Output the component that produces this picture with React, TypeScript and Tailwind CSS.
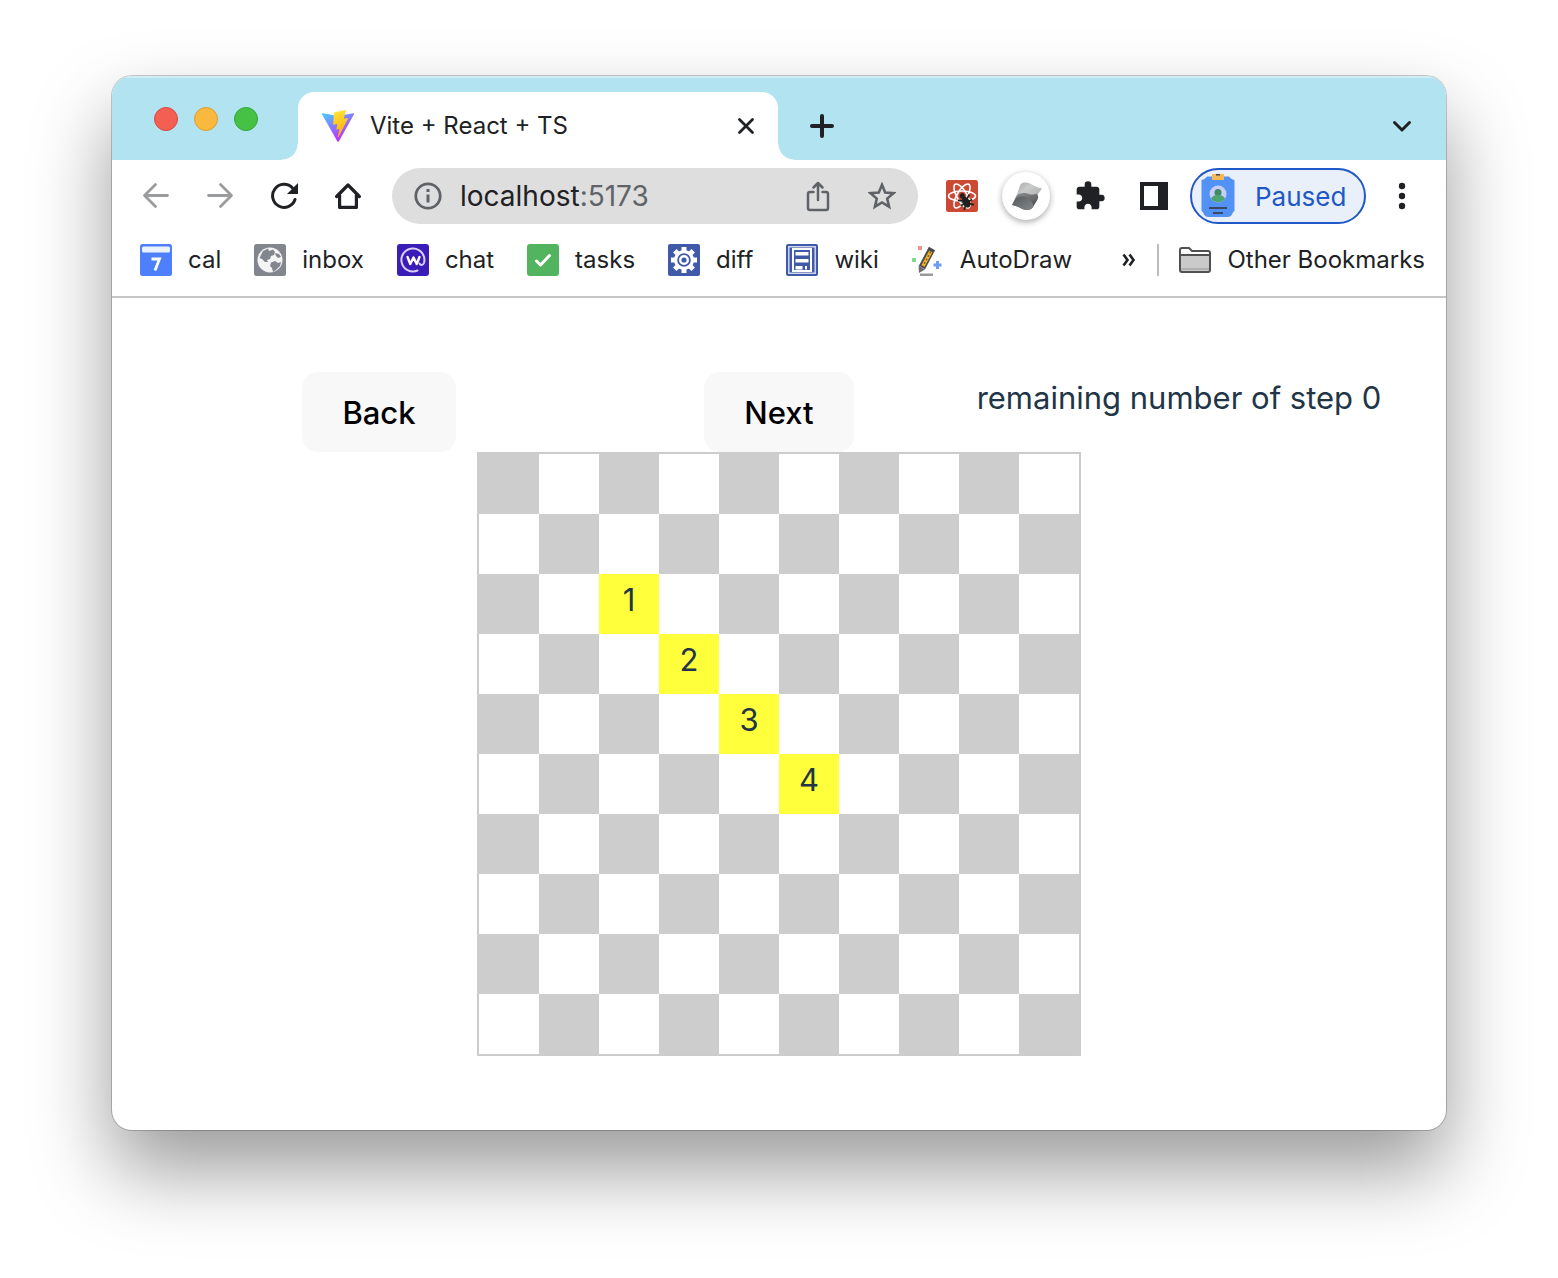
import type { ReactNode } from "react";

const visited: Record<string, number> = { "2-2": 1, "3-3": 2, "4-4": 3, "5-5": 4 };
const size = Array.from({ length: 10 }, (_, i) => i);

function ViteLogo() {
  return (
    <svg viewBox="0 0 32 32" className="size-8 shrink-0" aria-hidden="true">
      <defs>
        <linearGradient id="shield" x1="0" y1="0" x2="0.55" y2="0.9">
          <stop offset="0" stopColor="#41d1ff" />
          <stop offset="1" stopColor="#bd34fe" />
        </linearGradient>
        <linearGradient id="bolt" x1="0.4" y1="0" x2="0.6" y2="1">
          <stop offset="0" stopColor="#ffea5a" />
          <stop offset="0.1" stopColor="#ffdd35" />
          <stop offset="1" stopColor="#ffa800" />
        </linearGradient>
      </defs>
      <path fill="url(#shield)" d="M31.9 4.5 16.8 31.5a.8.8 0 0 1-1.4 0L.1 4.5a.8.8 0 0 1 .9-1.2l15 2.7 15-2.7a.8.8 0 0 1 .9 1.2Z" />
      <path fill="url(#bolt)" d="m23.4.1-11.2 2.2a.4.4 0 0 0-.3.4l-.7 11.6a.4.4 0 0 0 .5.4l3.1-.7a.4.4 0 0 1 .5.5l-.9 4.6a.4.4 0 0 0 .5.5l1.9-.6a.4.4 0 0 1 .5.5l-1.4 7.1c-.1.5.5.7.8.3l.2-.3 9-17.9a.4.4 0 0 0-.5-.6l-3.1.6a.4.4 0 0 1-.5-.5l2.1-7.5a.4.4 0 0 0-.5-.6Z" />
    </svg>
  );
}

function ToolButton({ label, children }: { label: string; children: ReactNode }) {
  return (
    <button type="button" aria-label={label} className="flex h-14 w-16 shrink-0 items-center justify-center">
      {children}
    </button>
  );
}

function TabStrip() {
  return (
    <div className="flex h-[84px] items-end bg-[#b2e3f0] shadow-[inset_0_2px_0_#cdeef6]">
      <div className="flex h-full w-[186px] shrink-0 gap-4 pt-[31px] pl-[42px]">
        <button type="button" aria-label="Close window" className="size-6 rounded-full border border-[#d9493f] bg-[#f35f51]" />
        <button type="button" aria-label="Minimize window" className="size-6 rounded-full border border-[#dc9e35] bg-[#f9b83e]" />
        <button type="button" aria-label="Zoom window" className="size-6 rounded-full border border-[#33a635] bg-[#47c145]" />
      </div>
      <div className="relative flex h-[68px] w-[480px] items-center rounded-t-2xl bg-white pl-6 pr-5">
        <span className="absolute bottom-0 -left-4 size-4 bg-[radial-gradient(circle_at_0_0,transparent_15px,#fff_16px)]" />
        <span className="absolute -right-4 bottom-0 size-4 bg-[radial-gradient(circle_at_100%_0,transparent_15px,#fff_16px)]" />
        <ViteLogo />
        <span className="ml-4 flex-1 text-2xl text-[#202124]">Vite + React + TS</span>
        <button type="button" aria-label="Close tab" className="flex size-6 items-center justify-center">
          <svg viewBox="0 0 24 24" className="size-6" fill="none" stroke="#202124" strokeWidth="2.8" strokeLinecap="round">
            <path d="m5.5 5.5 13 13M18.5 5.5l-13 13" />
          </svg>
        </button>
      </div>
      <button type="button" aria-label="New tab" className="ml-8 flex h-[68px] w-6 items-center justify-center">
        <svg viewBox="0 0 24 24" className="size-6" fill="none" stroke="#202124" strokeWidth="4" strokeLinecap="round">
          <path d="M12 2v20M2 12h20" />
        </svg>
      </button>
      <button type="button" aria-label="Search tabs" className="mr-8 ml-auto flex h-[68px] w-6 items-center justify-center">
        <svg viewBox="0 0 24 24" className="size-6" fill="none" stroke="#202124" strokeWidth="3" strokeLinecap="round" strokeLinejoin="round">
          <path d="m4.5 8.5 7.5 7.5 7.5-7.5" />
        </svg>
      </button>
    </div>
  );
}

function Toolbar() {
  return (
    <div className="flex h-[72px] items-center px-3">
      <ToolButton label="Back in history">
        <svg viewBox="0 0 28 28" className="size-7" fill="none" stroke="#9a9b9d" strokeWidth="2.8" strokeLinecap="round" strokeLinejoin="round">
          <path d="M25.500 13.500H3M13.500 2.500l-11 11 11 11" />
        </svg>
      </ToolButton>
      <ToolButton label="Forward in history">
        <svg viewBox="0 0 28 28" className="size-7" fill="none" stroke="#9a9b9d" strokeWidth="2.8" strokeLinecap="round" strokeLinejoin="round">
          <path d="M2.500 13.500H25M14.500 2.500l11 11-11 11" />
        </svg>
      </ToolButton>
      <ToolButton label="Reload">
        <svg viewBox="0 0 28 28" className="size-7" fill="none" stroke="#202124" strokeWidth="3">
          <path strokeLinecap="round" d="M25 17.500A11.500 11.500 0 1 1 22.500 6" />
          <path stroke="none" fill="#202124" d="M28 1v11H17Z" />
        </svg>
      </ToolButton>
      <ToolButton label="Home">
        <svg viewBox="0 0 28 28" className="size-7" fill="none" stroke="#202124" strokeWidth="3.2" strokeLinejoin="round" strokeLinecap="round">
          <path d="M2.600 14.500 14 3l11.400 11.500M5.600 13v12.400h16.800V13" />
        </svg>
      </ToolButton>
      <div className="mx-3 flex h-14 min-w-0 flex-1 items-center rounded-full bg-[#dedede] px-[22px]">
        <svg viewBox="0 0 28 28" className="size-7 shrink-0" fill="none" stroke="#5f6368" strokeWidth="2.8" aria-hidden="true">
          <circle cx="14" cy="14" r="12.2" />
          <path strokeWidth="3" d="M14 12.500v8M14 7v3" />
        </svg>
        <a href="http://localhost:5173" className="ml-[18px] flex-1 text-[28px] text-[#5f6368]">
          <span className="text-[#202124]">localhost</span>:5173
        </a>
        <button type="button" aria-label="Share" className="flex size-7 items-center justify-center">
          <svg viewBox="0 0 28 32" className="h-8 w-7" fill="none" stroke="#5f6368" strokeWidth="2.5" strokeLinecap="round" strokeLinejoin="round">
            <path d="M9.500 12H6a2 2 0 0 0-2 2v14a2 2 0 0 0 2 2h16a2 2 0 0 0 2-2V14a2 2 0 0 0-2-2h-3.500M14 20V3.500M9.500 7.500 14 3l4.500 4.500" />
          </svg>
        </button>
        <button type="button" aria-label="Bookmark this tab" className="ml-9 flex size-7 items-center justify-center">
          <svg viewBox="0 0 28 28" className="size-7" fill="none" stroke="#5f6368" strokeWidth="2.6">
            <path d="m14 2.800 3.200 7.700 8.200.7-6.200 5.400 1.900 8.100L14 20.400l-7.100 4.300 1.900-8.100-6.200-5.400 8.200-.7Z" />
          </svg>
        </button>
      </div>
      <ToolButton label="React Developer Tools">
        <svg viewBox="0 0 32 32" className="size-8">
          <rect width="32" height="32" rx="2.5" fill="#cc4a35" />
          <g fill="none" stroke="#fff" strokeWidth="1.6">
            <ellipse cx="16" cy="16" rx="13.5" ry="5" />
            <ellipse cx="16" cy="16" rx="13.5" ry="5" transform="rotate(60 16 16)" />
            <ellipse cx="16" cy="16" rx="13.5" ry="5" transform="rotate(120 16 16)" />
          </g>
          <g fill="#20201f" transform="rotate(-28 19 20)">
            <circle cx="18.5" cy="15" r="2.6" />
            <ellipse cx="19" cy="22.500" rx="3.6" ry="5.800" />
            <path stroke="#20201f" strokeWidth="1.7" fill="none" d="m12.500 17 3.500 2.500h6l3.500-2.500M12.500 23h13M13.500 28.500l3-3h5l3 3" />
          </g>
        </svg>
      </ToolButton>
      <ToolButton label="Solid Devtools">
        <span className="flex size-12 items-center justify-center rounded-full bg-white shadow-[0_2px_6px_rgba(0,0,0,0.35)]">
          <svg viewBox="0 0 31 30" className="h-[30px] w-[31px]">
            <defs>
              <linearGradient id="upper" x1="0" y1="0" x2="1" y2="0.6">
                <stop offset="0" stopColor="#a4a6a8" />
                <stop offset="0.5" stopColor="#c9caca" />
                <stop offset="1" stopColor="#b4b5b6" />
              </linearGradient>
              <linearGradient id="lower" x1="0" y1="0" x2="0.7" y2="1">
                <stop offset="0" stopColor="#909294" />
                <stop offset="1" stopColor="#4c4e50" />
              </linearGradient>
              <linearGradient id="fold" x1="0" y1="0" x2="1" y2="1">
                <stop offset="0" stopColor="#55585a" />
                <stop offset="1" stopColor="#85888a" />
              </linearGradient>
            </defs>
            <path fill="url(#upper)" d="M9.500 3.500C11.500 1 16 1 19.500 2.800 23 4.800 27 7 31 7.500L27 13c-3 2-6 2-9 .5-4-1.500-8-2-12.500 1Z" />
            <path fill="url(#lower)" d="M5.500 14.500c4-3.500 9-2.800 13-1.300 2.500.8 5 .3 7.500-.4 1.500 1.700 1.500 4 .3 6.200l-4.300 7c-2 3.200-6 3.500-10 2.200C8.500 26.500 5 24.500 1 24Z" />
            <path fill="url(#fold)" d="M1 24l4-6.500c3-2.800 7.500-2.500 10.500-1 4 2 7 5 6.500 9.500-2 3.200-6 3.500-10 2.200C8.500 26.500 5 24.500 1 24Z" />
          </svg>
        </span>
      </ToolButton>
      <ToolButton label="Extensions">
        <svg viewBox="0 0 24 24" className="size-8" fill="#202124">
          <path d="M20.500 11H19V7c0-1.100-.9-2-2-2h-4V3.500a2.500 2.500 0 0 0-5 0V5H4c-1.100 0-1.990.9-1.990 2v3.800H3.500c1.490 0 2.700 1.210 2.700 2.700s-1.210 2.700-2.700 2.700H2V20c0 1.100.9 2 2 2h3.800v-1.500c0-1.490 1.210-2.700 2.700-2.700 1.490 0 2.700 1.210 2.700 2.700V22H17c1.100 0 2-.9 2-2v-4h1.500a2.500 2.500 0 0 0 0-5z" />
        </svg>
      </ToolButton>
      <ToolButton label="Side panel">
        <span className="block size-7 border-4 border-r-[10px] border-[#202124]" />
      </ToolButton>
      <button type="button" className="mx-1 flex h-14 w-44 shrink-0 items-center rounded-full border-2 border-[#2058c7] bg-[#eaf0fa] pl-[9px] text-[26px] text-[#2058c7]">
        <svg viewBox="0 0 34 44" className="h-11 w-[34px]" aria-hidden="true">
          <path fill="#5291f5" d="M6 2.500h22c1.500 2 3 2.800 5.500 3.500v31c-1 .5-1.500 1-2 2.500-.8 2-2.500 3.500-5 3.500h-19c-2.500 0-4.200-1.500-5-3.500-.5-1.500-1-2-2-2.500V6C3 5.300 4.500 4.500 6 2.500Z" />
          <path fill="#f7b955" d="M11 0h12v6H11Z" />
          <path fill="#41464d" d="M15 0h4v1.500h-4Z" />
          <circle cx="17" cy="20" r="8.5" fill="#c5cdf8" />
          <circle cx="17" cy="18.500" r="3.5" fill="#3f8a62" />
          <path fill="#4da472" d="M10 24.500c1-2.500 4-3.500 7-3.500s6 1 7 3.500c-3 5-11 5-14 0Z" />
          <path stroke="#3a4a66" strokeWidth="2" d="M8 34h18M12 39h10" />
        </svg>
        <span className="ml-5">Paused</span>
      </button>
      <ToolButton label="Menu">
        <svg viewBox="0 0 8 28" className="h-7 w-2" fill="#202124">
          <circle cx="4" cy="4" r="3.2" />
          <circle cx="4" cy="14" r="3.2" />
          <circle cx="4" cy="24" r="3.2" />
        </svg>
      </ToolButton>
    </div>
  );
}

const bookmarks: { name: string; icon: ReactNode }[] = [
  {
    name: "cal",
    icon: (
      <>
        <rect width="32" height="32" rx="2.5" fill="#4e7ffc" />
        <rect x="2" y="2.500" width="28" height="6" rx="1.5" fill="#fff" opacity=".9" />
        <path fill="none" stroke="#fff" strokeWidth="2.8" d="M11.500 15h8l-4.500 11.500" />
      </>
    ),
  },
  {
    name: "inbox",
    icon: (
      <>
        <rect width="32" height="32" rx="2.5" fill="#82868f" />
        <circle cx="16" cy="16" r="12.5" fill="#f4f4f5" />
        <path fill="#82868f" d="m9 7 5-2.500 1 2.500 4-1.500 2 2.500-1 3-3 1-1 3-3 1 1 2h-3L8 15 5.500 14ZM17 18.500l4-1.500 3 2 3-1-1 4-4 4-3 2-1-4-2-2ZM21 9l4 1 2 3-3 1-2-2Z" />
      </>
    ),
  },
  {
    name: "chat",
    icon: (
      <>
        <rect width="32" height="32" rx="3" fill="#3a1db8" />
        <path fill="none" stroke="#d9d1f8" strokeWidth="2" strokeLinecap="round" d="M20.500 26.500A11.500 11.500 0 1 1 27 19c-1 2.500-3.500 2.500-4.500.5" />
        <path fill="none" stroke="#fff" strokeWidth="2.4" strokeLinecap="round" strokeLinejoin="round" d="m10.500 13 2.800 7 3.200-6.500 3.200 6.500L22.500 13" />
      </>
    ),
  },
  {
    name: "tasks",
    icon: (
      <>
        <rect width="32" height="32" rx="3" fill="#52b45f" />
        <path fill="none" stroke="#fff" strokeWidth="3" strokeLinecap="round" strokeLinejoin="round" d="m9.500 17 4 4 9-9.500" />
      </>
    ),
  },
  {
    name: "diff",
    icon: (
      <>
        <rect width="32" height="32" rx="2" fill="#4059a9" />
        <g stroke="#fff" strokeWidth="5">
          <path d="M16 3v26M3 16h26M6.800 6.800l18.400 18.400M25.200 6.800 6.800 25.200" />
        </g>
        <circle cx="16" cy="16" r="10" fill="#fff" />
        <circle cx="16" cy="16" r="6.800" fill="#4059a9" />
        <circle cx="16" cy="16" r="3.8" fill="none" stroke="#fff" strokeWidth="2.4" />
      </>
    ),
  },
  {
    name: "wiki",
    icon: (
      <>
        <rect width="32" height="32" rx="2" fill="#4059a9" />
        <path fill="none" stroke="#fff" strokeWidth="1.5" d="M2.800 2.800h26.400v26.400H2.800Z" opacity=".75" />
        <path fill="none" stroke="#fff" strokeWidth="2" d="M7 5h18v22H7Z" />
        <path fill="#fff" d="M9.500 8h13v3.500h-13ZM9.500 15h13v3.500h-13ZM9.500 22h7v3.500h-7ZM19 22h2v3.500h-2Z" />
      </>
    ),
  },
  {
    name: "AutoDraw",
    icon: (
      <>
        <path stroke="#4b4b4b" strokeWidth="7" d="M20 4.500 10 23.500" />
        <path stroke="#f3b62b" strokeWidth="3.6" d="M18.800 7.500 11 22" />
        <path stroke="#8b6a1c" strokeWidth="1.6" strokeDasharray="2 2" d="M18.800 7.500 11 22" />
        <path fill="#6c6c6c" d="m6.500 21.500 6.500 4-6 3.500Z" />
        <path fill="#999" d="M8 29.500h13V32H8Z" />
        <path fill="#ee7670" opacity=".8" d="M6 2h4v4H6Z" />
        <path fill="#81d98a" d="M0 14h4v4H0Z" />
        <path fill="#4b83f2" opacity=".8" d="M24 17h3v2.500h2.500v3H27V25h-3v-2.500h-2.500v-3H24Z" />
      </>
    ),
  },
];

function BookmarksBar() {
  return (
    <nav aria-label="Bookmarks" className="flex h-[66px] items-center border-b-2 border-[#c6c6c6] pr-[21px] pb-2 pl-7 text-2xl text-[#202124]">
      <div className="flex gap-[33px]">
        {bookmarks.map((b) => (
          <a key={b.name} href={"#" + b.name} className="flex items-center gap-4">
            <svg viewBox="0 0 32 32" className="size-8" aria-hidden="true">{b.icon}</svg>
            {b.name}
          </a>
        ))}
      </div>
      <button type="button" aria-label="More bookmarks" className="ml-auto flex h-8 items-center pr-[21px]">
        <svg viewBox="0 0 14 14" className="size-[14px]" fill="none" stroke="#202124" strokeWidth="2.6">
          <path d="m1.500 1.500 4 5.500-4 5.500M7.500 1.500l4 5.500-4 5.500" />
        </svg>
      </button>
      <a href="#other" className="flex h-8 items-center gap-4 border-l-2 border-[#bcbcbc] pl-5">
        <svg viewBox="0 0 32 26" className="h-[26px] w-8" aria-hidden="true">
          <path fill="#fff" stroke="#505050" strokeWidth="2" strokeLinejoin="round" d="M1 8V3a2 2 0 0 1 2-2h7l3 3h16a2 2 0 0 1 2 2v2Z" />
          <path fill="#cacaca" stroke="#505050" strokeWidth="2" strokeLinejoin="round" d="M1 8h30v15a2 2 0 0 1-2 2H3a2 2 0 0 1-2-2Z" />
          <path fill="#b0b0b0" d="M2 21h28v2H2Z" />
        </svg>
        Other Bookmarks
      </a>
    </nav>
  );
}

function StepButton({ children }: { children: ReactNode }) {
  return (
    <button type="button" className="h-20 rounded-2xl bg-[#f8f8f8] px-10 pt-0.5 text-[31px] font-medium text-black">
      {children}
    </button>
  );
}

export default function App() {
  return (
    <div className="bg-white px-28 pt-[76px] pb-[148px] font-[Inter,sans-serif]">
      <div className="overflow-hidden rounded-[20px] bg-white shadow-[0_0_0_1px_rgba(0,0,0,0.2),0_40px_80px_rgba(0,0,0,0.4)]">
        <TabStrip />
        <Toolbar />
        <BookmarksBar />
        <main className="flex flex-col items-center py-[74px] text-[#213547]">
          <div className="grid w-full max-w-[1200px] grid-cols-3 justify-items-center">
            <StepButton>Back</StepButton>
            <StepButton>Next</StepButton>
            <p className="text-[31px] leading-[52px] whitespace-nowrap">remaining number of step 0</p>
          </div>
          <div className="grid grid-cols-10 border-2 border-[#ccc]">
            {size.map((r) =>
              size.map((c) => {
                const step = visited[r + "-" + c];
                const tone = step ? "bg-[#ffff3c]" : (r + c) % 2 === 0 ? "bg-[#cdcdcd]" : "bg-white";
                return (
                  <div key={r + "-" + c} className={"size-[60px] text-center text-[31px] leading-[52px] " + tone}>
                    {step}
                  </div>
                );
              }),
            )}
          </div>
        </main>
      </div>
    </div>
  );
}
